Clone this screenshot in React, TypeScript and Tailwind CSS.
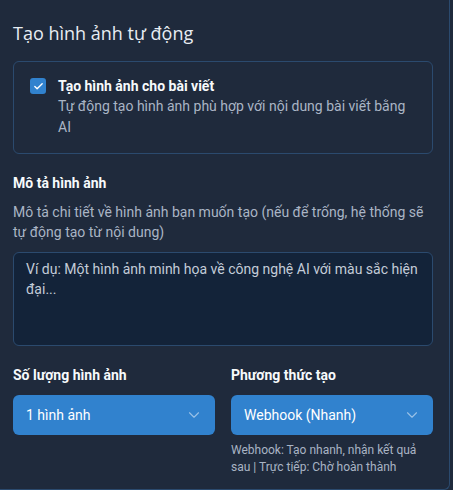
import { Check, ChevronDown } from 'lucide-react';

const body = { fontFamily: 'Roboto, "Noto Sans", sans-serif' };

function SelectBox({ value }: { value: string }) {
  return (
    <button
      type="button"
      className="flex h-10 w-full items-center justify-between rounded-md bg-[#3182ce] pl-[13px] pr-[12px] text-left text-sm text-white"
    >
      <span>{value}</span>
      <ChevronDown size={18} strokeWidth={1.5} className="stroke-white/50" />
    </button>
  );
}

export default function App() {
  return (
    <div className="min-h-screen bg-[#1f2a3c]" style={body}>
      <div className="h-[490px] w-[450px] rounded-br-md border-r border-b border-[#2b4a6e] pt-[19px] pr-4 pl-[13px]">
        <h2
          className="text-lg leading-7 text-[#e8edf3]"
          style={{ fontFamily: '"Open Sans", sans-serif' }}
        >
          Tạo hình ảnh tự động
        </h2>

        {/* Toggle card */}
        <div className="mt-[14px] flex items-start gap-3 rounded-md border border-[#2b4a6e] px-4 pt-[14px] pb-[15px]">
          <span className="mt-[2px] flex h-4 w-4 shrink-0 items-center justify-center rounded-[3px] bg-[#3182ce]">
            <Check size={11} strokeWidth={3} className="stroke-white" />
          </span>
          <div>
            <p className="text-sm leading-5 font-bold text-[#f7fafc]">Tạo hình ảnh cho bài viết</p>
            <p className="text-sm leading-[21px] text-[#aab5c5]">
              Tự động tạo hình ảnh phù hợp với nội dung bài viết bằng AI
            </p>
          </div>
        </div>

        {/* Description */}
        <label className="mt-[19px] block text-sm leading-5 font-bold text-[#f7fafc]">Mô tả hình ảnh</label>
        <p className="mt-[9px] text-sm leading-5 text-[#aab5c5]">
          Mô tả chi tiết về hình ảnh bạn muốn tạo (nếu để trống, hệ thống sẽ tự động tạo từ nội dung)
        </p>
        <textarea
          className="mt-[10px] block h-[94px] w-full resize-none rounded-md border border-[#2b4a6e] bg-[#132339] px-3 pt-[6px] text-sm leading-5 text-white outline-none placeholder:text-[#c3ccd8]"
          placeholder="Ví dụ: Một hình ảnh minh họa về công nghệ AI với màu sắc hiện đại..."
        />

        {/* Options */}
        <div className="mt-[19px] grid grid-cols-2 gap-4">
          <div>
            <label className="block text-sm leading-5 font-bold text-[#f7fafc]">Số lượng hình ảnh</label>
            <div className="mt-[10px]">
              <SelectBox value="1 hình ảnh" />
            </div>
          </div>
          <div>
            <label className="block text-sm leading-5 font-bold text-[#f7fafc]">Phương thức tạo</label>
            <div className="mt-[10px]">
              <SelectBox value="Webhook (Nhanh)" />
            </div>
            <p className="mt-[7px] text-xs leading-[17px] text-[#a9b4c4]">
              Webhook: Tạo nhanh, nhận kết quả sau | Trực tiếp: Chờ hoàn thành
            </p>
          </div>
        </div>
      </div>
    </div>
  );
}
